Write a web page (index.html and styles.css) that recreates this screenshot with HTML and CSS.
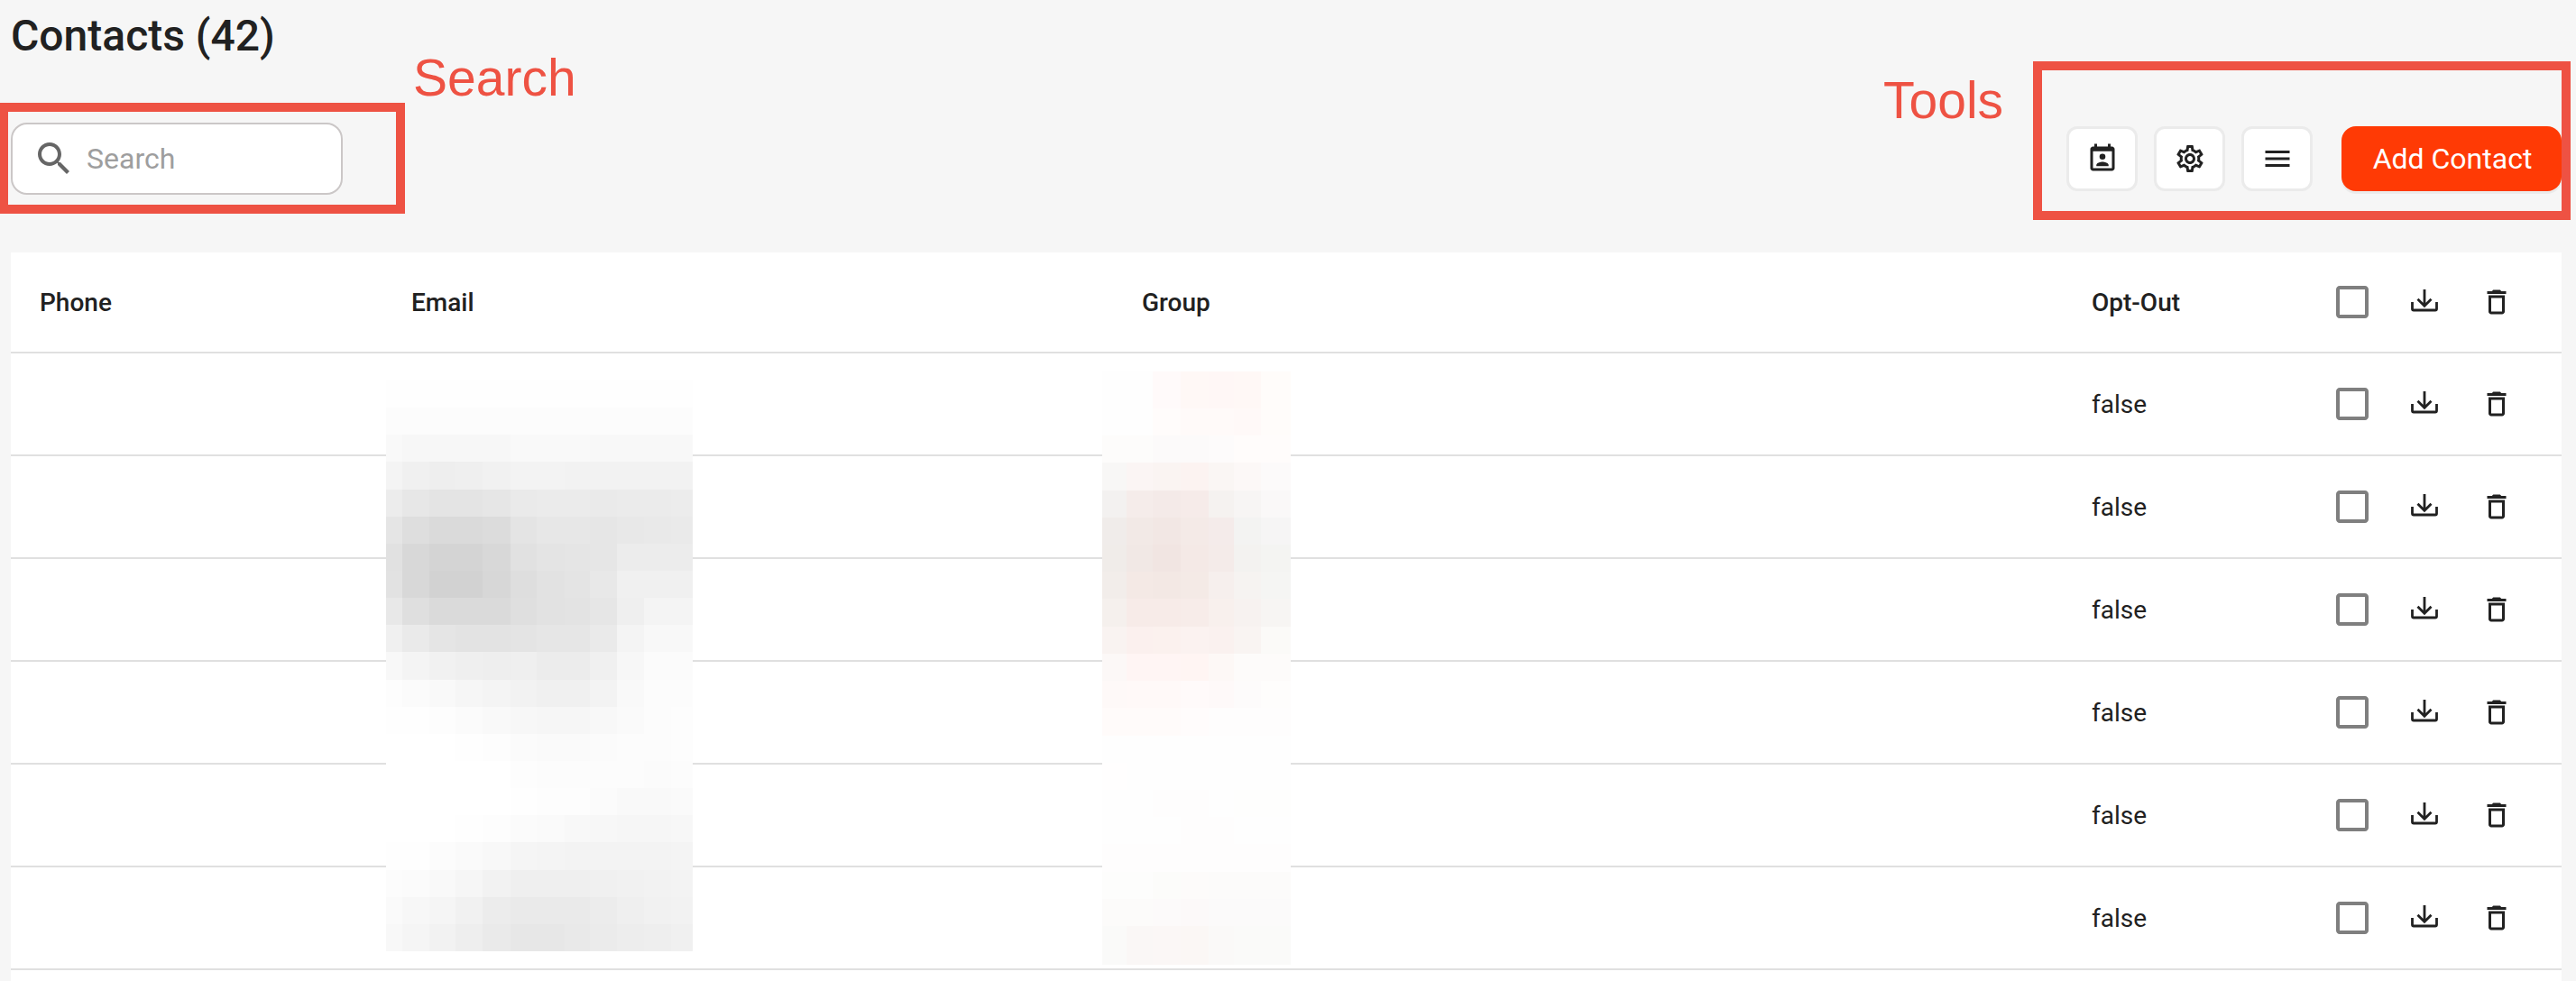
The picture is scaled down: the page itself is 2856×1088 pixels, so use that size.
FILE: index.html
```html
<!DOCTYPE html>
<html>
<head>
    <title>Contacts</title>
    <meta charset="UTF-8">
    <link rel="stylesheet" href="styles.css">
</head>
<body>
    <!-- Icon set, reused by every row -->
    <svg class="icon-defs" aria-hidden="true">
        <symbol id="icon-search" viewBox="0 0 24 24"><path d="M15.5 14h-.79l-.28-.27C15.41 12.59 16 11.11 16 9.5 16 5.91 13.09 3 9.5 3S3 5.91 3 9.5 5.91 16 9.5 16c1.61 0 3.09-.59 4.23-1.57l.27.28v.79l5 4.99L20.49 19l-4.99-5zm-6 0C7.01 14 5 11.99 5 9.5S7.01 5 9.5 5 14 7.01 14 9.5 11.99 14 9.5 14z"/></symbol>
        <symbol id="icon-calendar" viewBox="0 0 24 24"><path fill-rule="evenodd" d="M19 3h-1V1h-2v2H8V1H6v2H5c-1.1 0-2 .9-2 2v14c0 1.1.9 2 2 2h14c1.1 0 2-.9 2-2V5c0-1.1-.9-2-2-2zm0 16H5V6.5h14V19z"/><circle cx="12" cy="10.5" r="2.2"/><path d="M7.5 17.5v-.8c0-1.5 3-2.3 4.5-2.3s4.500.8 4.500 2.300v.8z"/></symbol>
        <symbol id="icon-settings" viewBox="0 0 24 24"><path d="M19.43 12.98c.04-.32.07-.64.07-.98 0-.34-.03-.66-.07-.98l2.11-1.65c.19-.15.24-.42.12-.64l-2-3.46c-.09-.16-.26-.25-.44-.25-.06 0-.12.01-.17.03l-2.49 1c-.52-.4-1.08-.73-1.69-.98l-.38-2.65C14.46 2.18 14.25 2 14 2h-4c-.25 0-.46.18-.49.42l-.38 2.65c-.61.25-1.17.59-1.69.98l-2.49-1c-.06-.02-.12-.03-.18-.03-.17 0-.34.09-.43.25l-2 3.46c-.13.22-.07.49.12.64l2.11 1.65c-.04.32-.07.65-.07.98 0 .33.03.66.07.98l-2.11 1.65c-.19.15-.24.42-.12.64l2 3.46c.09.16.26.25.44.25.06 0 .12-.01.17-.03l2.49-1c.52.4 1.08.73 1.69.98l.38 2.65c.03.24.24.42.49.42h4c.25 0 .46-.18.49-.42l.38-2.65c.61-.25 1.17-.59 1.69-.98l2.49 1c.06.02.12.03.18.03.17 0 .34-.09.43-.25l2-3.46c.12-.22.07-.49-.12-.64l-2.11-1.65zm-1.98-1.71c.04.31.05.52.05.73 0 .21-.02.43-.05.73l-.14 1.13.89.7 1.08.84-.7 1.21-1.27-.51-1.04-.42-.9.68c-.43.32-.84.56-1.25.73l-1.06.43-.16 1.13-.2 1.35h-1.4l-.19-1.35-.16-1.13-1.06-.43c-.43-.18-.83-.41-1.23-.71l-.91-.7-1.06.43-1.27.51-.7-1.21 1.08-.84.89-.7-.14-1.13c-.03-.31-.05-.54-.05-.74s.02-.43.05-.73l.14-1.13-.89-.7-1.08-.84.7-1.21 1.27.51 1.04.42.9-.68c.43-.32.84-.56 1.25-.73l1.06-.43.16-1.13.2-1.35h1.39l.19 1.35.16 1.13 1.06.43c.43.18.83.41 1.23.71l.91.7 1.06-.43 1.27-.51.7 1.21-1.07.85-.89.7.14 1.13zM12 8c-2.21 0-4 1.79-4 4s1.79 4 4 4 4-1.79 4-4-1.79-4-4-4zm0 6c-1.1 0-2-.9-2-2s.9-2 2-2 2 .9 2 2-.9 2-2 2z"/></symbol>
        <symbol id="icon-menu" viewBox="0 0 24 24"><path d="M3 18h18v-2H3v2zm0-5h18v-2H3v2zm0-7v2h18V6H3z"/></symbol>
        <symbol id="icon-checkbox" viewBox="0 0 24 24"><path d="M19 5v14H5V5h14m0-2H5c-1.1 0-2 .9-2 2v14c0 1.1.9 2 2 2h14c1.1 0 2-.9 2-2V5c0-1.1-.9-2-2-2z"/></symbol>
        <symbol id="icon-download" viewBox="0 0 36 36"><path class="line-icon" d="M18 4v18M10.500 14.800 18 22.300l7.500-7.500M4.500 18v7.500c0 1 .5 1.500 1.500 1.500h24c1 0 1.500-.5 1.500-1.500V18"/></symbol>
        <symbol id="icon-trash" viewBox="0 0 24 24"><path d="M6 19c0 1.100.9 2 2 2h8c1.100 0 2-.9 2-2V7H6v12zM8 9h8v10H8V9zm7.500-5l-1-1h-5l-1 1H5v2h14V4z"/></symbol>
    </svg>

    <div class="page">
        <h1 class="page-title">Contacts (42)</h1>

        <div class="toolbar">
            <label class="search-box">
                <svg class="icon-search"><use href="#icon-search"/></svg>
                <input class="search-input" type="text" placeholder="Search">
            </label>
            <div class="tools">
                <button class="tool-button"><svg class="icon-md"><use href="#icon-calendar"/></svg></button>
                <button class="tool-button"><svg class="icon-md"><use href="#icon-settings"/></svg></button>
                <button class="tool-button"><svg class="icon-md"><use href="#icon-menu"/></svg></button>
                <button class="add-button">Add Contact</button>
            </div>
        </div>

        <div class="table-card">
            <table class="contacts-table">
                <colgroup>
                    <col class="col-phone">
                    <col class="col-email">
                    <col class="col-group">
                    <col class="col-optout">
                    <col class="col-actions">
                </colgroup>
                <thead>
                    <tr>
                        <th>Phone</th>
                        <th>Email</th>
                        <th>Group</th>
                        <th>Opt-Out</th>
                        <th>
                            <div class="row-actions">
                                <svg class="icon-lg icon-muted"><use href="#icon-checkbox"/></svg>
                                <svg class="icon-md"><use href="#icon-download"/></svg>
                                <svg class="icon-md"><use href="#icon-trash"/></svg>
                            </div>
                        </th>
                    </tr>
                </thead>
                <tbody>
                    <tr>
                        <td></td><td></td><td></td><td>false</td>
                        <td>
                            <div class="row-actions">
                                <svg class="icon-lg icon-muted"><use href="#icon-checkbox"/></svg>
                                <svg class="icon-md"><use href="#icon-download"/></svg>
                                <svg class="icon-md"><use href="#icon-trash"/></svg>
                            </div>
                        </td>
                    </tr>
                    <tr>
                        <td></td><td></td><td></td><td>false</td>
                        <td>
                            <div class="row-actions">
                                <svg class="icon-lg icon-muted"><use href="#icon-checkbox"/></svg>
                                <svg class="icon-md"><use href="#icon-download"/></svg>
                                <svg class="icon-md"><use href="#icon-trash"/></svg>
                            </div>
                        </td>
                    </tr>
                    <tr>
                        <td></td><td></td><td></td><td>false</td>
                        <td>
                            <div class="row-actions">
                                <svg class="icon-lg icon-muted"><use href="#icon-checkbox"/></svg>
                                <svg class="icon-md"><use href="#icon-download"/></svg>
                                <svg class="icon-md"><use href="#icon-trash"/></svg>
                            </div>
                        </td>
                    </tr>
                    <tr>
                        <td></td><td></td><td></td><td>false</td>
                        <td>
                            <div class="row-actions">
                                <svg class="icon-lg icon-muted"><use href="#icon-checkbox"/></svg>
                                <svg class="icon-md"><use href="#icon-download"/></svg>
                                <svg class="icon-md"><use href="#icon-trash"/></svg>
                            </div>
                        </td>
                    </tr>
                    <tr>
                        <td></td><td></td><td></td><td>false</td>
                        <td>
                            <div class="row-actions">
                                <svg class="icon-lg icon-muted"><use href="#icon-checkbox"/></svg>
                                <svg class="icon-md"><use href="#icon-download"/></svg>
                                <svg class="icon-md"><use href="#icon-trash"/></svg>
                            </div>
                        </td>
                    </tr>
                    <tr>
                        <td></td><td></td><td></td><td>false</td>
                        <td>
                            <div class="row-actions">
                                <svg class="icon-lg icon-muted"><use href="#icon-checkbox"/></svg>
                                <svg class="icon-md"><use href="#icon-download"/></svg>
                                <svg class="icon-md"><use href="#icon-trash"/></svg>
                            </div>
                        </td>
                    </tr>
                </tbody>
            </table>
            <!-- Pixelated redactions over the email and group columns, filled by script.js -->
            <div id="emailBlur" class="mosaic mosaic-email"></div>
            <div id="groupBlur" class="mosaic mosaic-group"></div>
        </div>
    </div>

    <!-- Annotations drawn on top of the screenshot -->
    <div class="note-box note-box-search"></div>
    <div class="note-label note-label-search">Search</div>
    <div class="note-box note-box-tools"></div>
    <div class="note-label note-label-tools">Tools</div>

    <script src="script.js"></script>
</body>
</html>
```

FILE: styles.css
```css
html, body {
    margin: 0;
    height: 100%;
    overflow: hidden;
}
body {
    background: #f6f6f6;
    color: #212121;
    font-family: Roboto, "Liberation Sans", sans-serif;
    position: relative;
}
.icon-defs {
    position: absolute;
    width: 0;
    height: 0;
}
.page {
    height: 100vh;
    box-sizing: border-box;
    padding: 0 16px 0 12px;
    display: flex;
    flex-direction: column;
}
.page-title {
    margin: 0;
    height: 136px;
    font-size: 48px;
    font-weight: 500;
    line-height: 80px;
}
.toolbar {
    display: flex;
    justify-content: space-between;
    align-items: center;
    height: 80px;
}
.search-box {
    display: flex;
    align-items: center;
    width: 368px;
    height: 80px;
    box-sizing: border-box;
    padding-left: 22px;
    gap: 12px;
    background: #fff;
    border: 2px solid #cbc7c7;
    border-radius: 18px;
}
.icon-search {
    width: 48px;
    height: 48px;
    fill: #666;
    flex: none;
}
.search-input {
    border: 0;
    outline: 0;
    width: 200px;
    padding: 0;
    font-family: inherit;
    font-size: 32px;
    color: #212121;
    background: transparent;
}
.search-input::placeholder {
    color: #9e9e9e;
    opacity: 1;
}
.tools {
    display: flex;
    align-items: center;
    gap: 18px;
}
.tool-button {
    width: 79px;
    height: 72px;
    padding: 0;
    display: flex;
    align-items: center;
    justify-content: center;
    background: #fff;
    border: 3px solid #ebebeb;
    border-radius: 12px;
}
.add-button {
    width: 244px;
    height: 72px;
    margin-left: 14px;
    padding: 0 0 0 2px;
    border: 0;
    border-radius: 16px;
    background: #ff3a05;
    color: #fff;
    font-family: inherit;
    font-size: 32px;
    box-shadow: 0 3px 0 #ebebeb;
}
.icon-md {
    width: 36px;
    height: 36px;
    fill: #212121;
    display: block;
    flex: none;
}
.icon-lg {
    width: 48px;
    height: 48px;
    display: block;
    flex: none;
}
.icon-muted {
    fill: #7f7f7f;
}
.line-icon {
    fill: none;
    stroke: #212121;
    stroke-width: 2.8;
}
.table-card {
    position: relative;
    margin-top: 64px;
    flex: 1;
    background: #fff;
}
.contacts-table {
    width: 2828px;
    table-layout: fixed;
    border-collapse: collapse;
    font-size: 28px;
}
.col-phone { width: 412px; }
.col-email { width: 810px; }
.col-group { width: 1053px; }
.col-optout { width: 281px; }
.col-actions { width: 272px; }
.contacts-table th,
.contacts-table td {
    padding: 0 0 0 32px;
    border-bottom: 2px solid #e0e0e0;
    text-align: left;
}
.contacts-table th {
    height: 110px;
    font-weight: 500;
}
.contacts-table td {
    height: 112px;
}
.contacts-table th:last-child,
.contacts-table td:last-child {
    padding: 0;
}
.row-actions {
    display: grid;
    grid-template-columns: repeat(3, 80px);
    justify-items: center;
    align-items: center;
}
.mosaic {
    position: absolute;
    display: grid;
}
.mosaic-email {
    left: 416px;
    top: 142px;
    width: 340px;
    height: 633px;
    grid-template-columns: 18px 30px 29px 30px 31px 29px 31px 28px 30px 30px 30px 24px;
    grid-template-rows: repeat(21, 1fr);
}
.mosaic-group {
    left: 1210px;
    top: 132px;
    width: 209px;
    height: 658px;
    grid-template-columns: 27px 29px 31px 31px 28px 30px 33px;
    grid-template-rows: 41px repeat(19, 1fr) 43px;
}
.note-box {
    position: absolute;
    box-sizing: border-box;
    border: 10px solid #ee5243;
}
.note-box-search {
    left: -1px;
    top: 114px;
    width: 450px;
    height: 123px;
}
.note-box-tools {
    left: 2254px;
    top: 68px;
    width: 596px;
    height: 176px;
}
.note-label {
    position: absolute;
    font-family: "Liberation Sans", Arial, sans-serif;
    font-size: 57px;
    line-height: 64px;
    color: #ee5243;
}
.note-label-search {
    left: 458px;
    top: 54px;
}
.note-label-tools {
    left: 2088px;
    top: 79px;
}
```

FILE: script.js
```js
// Gray levels of the email redaction, one row of hex pairs per mosaic row
const emailRows = [
    'fe fe fe fe fe fe fe fe fe fe fe fe',
    'fc fc fc fc fc fc fc fc fc fc fc fc',
    'f9 f7 f7 f7 f7 f9 f9 f9 f8 f8 f8 f8',
    'f4 f0 ee ef f1 f3 f3 f2 f2 f2 f2 f2',
    'ec e7 e4 e4 e6 ea eb eb ea eb eb ec',
    'e5 de da da dc e4 e7 e7 e6 e8 e9 ea',
    'e1 d8 d4 d4 d8 e1 e4 e5 e6 ec ec ec',
    'e2 d8 d2 d2 d7 de e2 e4 e8 f0 f0 f0',
    'e8 df da da da df e2 e3 e6 ef f4 f4',
    'f0 ea e5 e3 e3 e4 e6 e6 ea f4 f8 f8',
    'f8 f4 f1 ef ee ef ec ec f0 f7 fb fb',
    'fd fb f9 f6 f4 f2 f0 f0 f3 f9 fc fc',
    'fe fe fd fb f9 f7 f6 f6 f8 fa fc fd',
    'ff ff ff fe fd fb fa fa fb fc fc fd',
    'ff ff ff ff ff fd fc fc fc fc fb fc',
    'ff ff ff ff ff fe fd fd fb f9 f9 fa',
    'ff ff ff fe fd fb fa f8 f7 f6 f6 f7',
    'fe fe fc fa f8 f5 f4 f3 f3 f3 f3 f4',
    'fc fb f9 f6 f2 ef ef ef f0 f1 f2 f3',
    'fa f7 f5 f1 ec ea ea ea ec ef f1 f2',
    'f8 f5 f2 ee ea e7 e7 e9 eb ed ee f0'
];

// Same for the group redaction, which has a slight pink cast
const groupRows = [
    'fefefe fefefe fffafa fff8f6 fff7f6 fff8f6 fffcfa',
    'fefefe fefefe fffcfb fffaf9 fffaf9 fff9f8 fffcfa',
    'fdfcfb fdfcfb fcfafa fcfafa fdfbfb fffcfb fffcfb',
    'f8f7f6 fbf5f4 faf4f2 fcf3f1 faf6f4 fcf8f7 fcfafa',
    'f3f1f0 f5ecea f4eae8 f6ebe9 f5f2f0 f7f5f4 faf8f8',
    'f0ecea f2e9e6 f2e7e4 f4eae7 f4ebea f3f3f2 f6f5f5',
    'f0ece9 f1e8e5 f1e5e2 f4e9e6 f4ebe9 f3f2f0 f4f4f2',
    'f2edea f4e9e5 f3e8e4 f4eae6 f6efed f6f3f1 f5f5f3',
    'f5f0ed f7ebe8 f7ebe8 f7ece9 f8f0ed f7f2f0 f7f5f3',
    'f9f3f1 fbf0ee fbf1ee fbf2f0 faf1ef f9f4f2 fbfaf8',
    'fcf8f7 fff5f4 fff5f4 fff5f3 fdf8f6 fdfbfa fdfbfa',
    'fef9f8 fff9f8 fff9f8 fffafa fef9f9 fdfbfb fefdfc',
    'fffbfa fffbfa fffbfa fffcfc fefdfd fefdfd fefdfd',
    'fefefe fefefe fefefe fefefe fefefe fefefe fefefe',
    'fffefe fefefe fefefe fefefe fefefe fefefe fefefe',
    'fefefe fefefe fefdfd fefdfd fefefe fefefd fefefd',
    'fefefe fefefe fefefe fefdfd fefdfd fefefe fefefe',
    'fefdfd fefdfd fefdfd fefdfd fefdfd fefdfd fefdfd',
    'fdfdfc fdfdfc fcfcfa fdfbfa fcfbfa fcfbfa fcfbfa',
    'fcfbfa fcfbfa fcfafa fcf9f9 fbfafa fbfafa fbfafa',
    'fafaf9 faf7f6 fbf7f6 fbf7f5 faf9f8 fafaf9 fafaf9'
];

function fillMosaic(id, rows) {
    const mosaic = document.getElementById(id);
    rows.forEach(row => {
        row.split(' ').forEach(value => {
            const cell = document.createElement('div');
            cell.style.background = '#' + (value.length === 2 ? value + value + value : value);
            mosaic.appendChild(cell);
        });
    });
}

fillMosaic('emailBlur', emailRows);
fillMosaic('groupBlur', groupRows);
```
